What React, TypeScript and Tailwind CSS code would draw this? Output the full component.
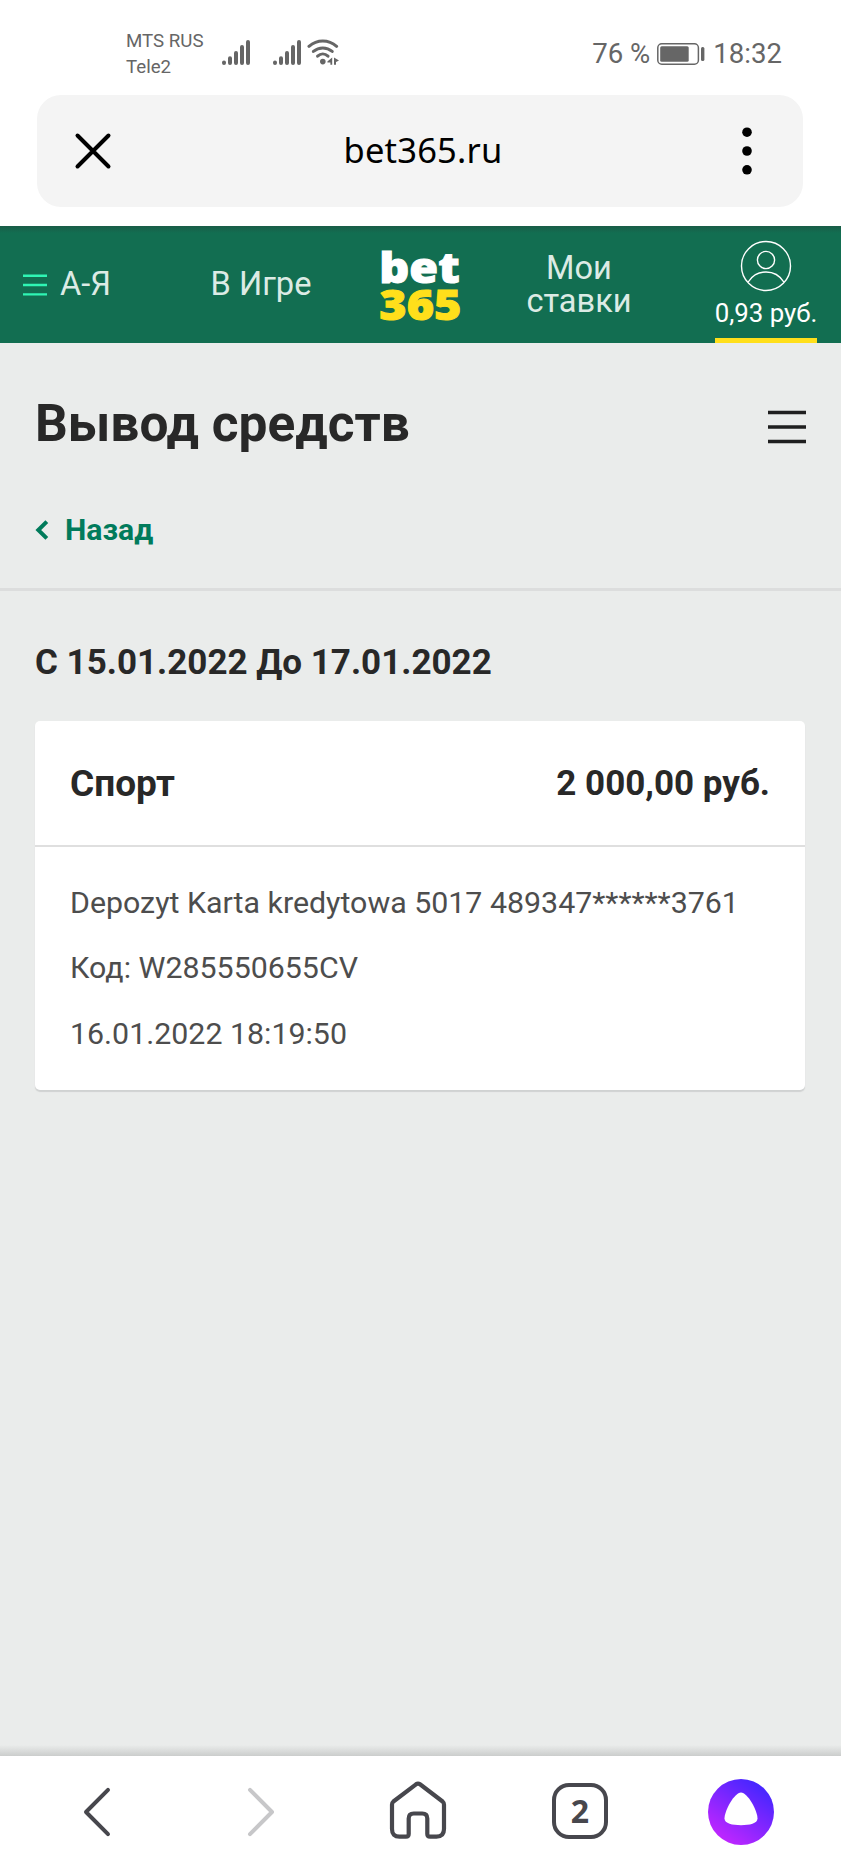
import React from "react";

interface TransactionType {
  product: string;
  amount: string;
  details: string[];
}

const transaction: TransactionType = {
  product: "Спорт",
  amount: "2 000,00 руб.",
  details: [
    "Depozyt Karta kredytowa 5017 489347******3761",
    "Код: W285550655CV",
    "16.01.2022 18:19:50",
  ],
};

const SignalIcon = () => (
  <svg width="28" height="26" viewBox="0 0 28 26" stroke="#666666" strokeWidth="4" strokeLinecap="round">
    <path d="M2 23.6v.4M8 19.2V24M14 14V24M20 8V24M26 3V24" />
  </svg>
);

const WifiIcon = () => (
  <svg width="34" height="28" viewBox="0 0 34 28" fill="none" stroke="#666666" strokeWidth="3.1" strokeLinecap="round">
    <path d="M2 8.3C10.2 1.2 21.4 1.2 29.6 8.3" />
    <path d="M6.4 13.4C12 8.8 19.6 8.8 25.2 13.4" />
    <path d="M10.6 18.1C13.8 15.2 17.8 15.2 21 18.1" />
    <circle cx="15.8" cy="23.6" r="2.8" fill="#666666" stroke="none" />
    <path d="M20.4 23.6L25.2 19.5V26.8H23.4V24.6H20.4ZM27 19.5L32 22.5L29 23.9V26.8H27Z" fill="#666666" stroke="none" />
  </svg>
);

const BatteryIcon = () => (
  <svg width="48" height="22" viewBox="0 0 48 22">
    <rect x=".8" y=".8" width="40.6" height="20.4" rx="4" fill="none" stroke="#666666" strokeWidth="1.5" />
    <rect x="3.2" y="3.2" width="28.5" height="15.6" rx="1.5" fill="#666666" />
    <rect x="44" y="4" width="3.4" height="14" rx="1.5" fill="#666666" />
  </svg>
);

const StatusBar = () => (
  <div className="flex h-[95px] items-start bg-white text-[#666666]">
    <div className="ml-[126px] mt-[28px] w-[96px] whitespace-nowrap text-[18.7px] leading-[26px]">
      <div>MTS RUS</div>
      <div>Tele2</div>
    </div>
    <div className="mt-[39px] flex">
      <SignalIcon />
      <div className="ml-[23px]">
        <SignalIcon />
      </div>
      <div className="-mt-[1px] ml-[6px]">
        <WifiIcon />
      </div>
    </div>
    <div className="ml-auto mr-[59px] mt-[38px] flex items-center whitespace-nowrap text-[27.6px] leading-8">
      <span>76 %</span>
      <div className="ml-[7px] mr-[8px]">
        <BatteryIcon />
      </div>
      <span>18:32</span>
    </div>
  </div>
);

const AddressBar = () => (
  <div className="h-[131px] bg-white pl-[37px] pr-[38px]">
    <div className="flex h-[112px] items-center justify-between rounded-[24px] bg-[#f4f4f4] px-[37px]">
      <svg width="38" height="38" viewBox="0 0 38 38" stroke="#000" strokeWidth="4" strokeLinecap="round">
        <path d="M3.5 3.5L34.5 34.5M34.5 3.5L3.5 34.5" />
      </svg>
      <span className="pb-[2px] pl-[6px] font-['Noto_Sans'] text-[34.5px] leading-none tracking-[0.2px] text-black">
        bet365.ru
      </span>
      <svg width="38" height="50" viewBox="0 0 38 50" fill="#000">
        <circle cx="19" cy="6.2" r="4.8" />
        <circle cx="19" cy="25" r="4.8" />
        <circle cx="19" cy="43.8" r="4.8" />
      </svg>
    </div>
  </div>
);

const SiteHeader = () => (
  <header className="flex h-[117px] bg-[#126e51] bg-[linear-gradient(#1a5c47,#126e51_7px)] text-[32.6px] text-[#dcebe5]">
    <div className="flex w-[180px] items-center pl-[23px]">
      <svg width="24" height="22" viewBox="0 0 24 22" stroke="#2ff5b4" strokeWidth="2.4">
        <path d="M0 1.7H24M0 11H24M0 20.4H24" />
      </svg>
      <span className="ml-[13px]">А-Я</span>
    </div>
    <div className="flex w-[162px] items-center justify-center">В Игре</div>
    <div className="flex w-[156px] items-center justify-center pl-[1px]">
      <div className="flex scale-x-110 flex-col font-['Open_Sans'] text-[42.5px] font-extrabold leading-[37px] [-webkit-text-stroke-width:1px]">
        <span className="text-white">bet</span>
        <span className="text-[#ffdf1b]">365</span>
      </div>
    </div>
    <div className="flex w-[160px] items-center justify-center pl-[2px] text-center leading-[33px]">
      Мои
      <br />
      ставки
    </div>
    <div className="ml-auto mr-[24px] flex w-[102px] flex-col items-center border-b-[5px] border-[#ffdf1b] pt-[14px] text-white">
      <svg width="52" height="52" viewBox="0 0 52 52" fill="none" stroke="#fff" strokeWidth="1.4">
        <circle cx="26" cy="26" r="24.5" />
        <circle cx="26" cy="20" r="8.6" />
        <path d="M8.2 42C16.5 28.6 35.5 28.6 43.8 42" />
      </svg>
      <span className="mt-[5px] whitespace-nowrap text-[25.8px] leading-[32px]">0,93 руб.</span>
    </div>
  </header>
);

const TransactionCard = ({ transaction }: { transaction: TransactionType }) => (
  <div className="ml-[35px] mr-[36px] h-[369px] rounded-[5px] bg-white shadow-[0_2px_1px_#d0d2d2]">
    <div className="flex h-[126px] items-center justify-between border-b-2 border-[#dfdfdf] px-[35px] pt-[2px] text-[35px] font-bold text-[#282828]">
      <span className="text-[37px]">{transaction.product}</span>
      <span>{transaction.amount}</span>
    </div>
    <div className="px-[35px] pt-[23px] text-[30.35px] leading-[65.4px] text-[#4d4d4d]">
      {transaction.details.map((line) => (
        <div key={line} className="whitespace-nowrap">
          {line}
        </div>
      ))}
    </div>
  </div>
);

/* browser navigation at the bottom of the screen */
const BottomBar = () => (
  <nav className="flex h-[112px] items-center bg-white pb-[1px]">
    <div className="flex w-[178px] justify-center pl-[16px]">
      <svg width="30" height="52" viewBox="0 0 30 52" fill="none" stroke="#47474d" strokeWidth="4" strokeLinecap="round" strokeLinejoin="round">
        <path d="M26 3.8L4 26L26 48.2" />
      </svg>
    </div>
    <div className="flex w-[162px] justify-center pl-[3px]">
      <svg width="30" height="52" viewBox="0 0 30 52" fill="none" stroke="#c7c7c9" strokeWidth="4" strokeLinecap="round" strokeLinejoin="round">
        <path d="M4 3.8L26 26L4 48.2" />
      </svg>
    </div>
    <div className="flex w-[156px] justify-center pb-[1px]">
      <svg width="60" height="60" viewBox="0 0 60 60" fill="none" stroke="#47474d" strokeWidth="4.2" strokeLinejoin="round">
        <path d="M28 3.3Q30 1.8 32 3.3L54.6 20.5Q56 21.7 56 23.5V48Q56 55.6 48.5 55.6H42Q39.3 55.6 39.3 53V37.5Q39.3 32.5 34.3 32.5H25.7Q20.7 32.5 20.7 37.5V53Q20.7 55.6 18 55.6H11.5Q4 55.6 4 48V23.5Q4 21.7 5.4 20.5Z" />
      </svg>
    </div>
    <div className="flex w-[168px] justify-center pb-[1px]">
      <div className="flex size-[56px] items-center justify-center rounded-[17px] border-4 border-[#47474d] font-['Noto_Sans'] text-[32px] font-bold leading-none text-[#47474d]">
        2
      </div>
    </div>
    <div className="flex w-[154px] justify-center">
      <div className="flex size-[66px] items-center justify-center rounded-full bg-[linear-gradient(215deg,#3f26ff_10%,#c226ff_88%)]">
        <svg className="-mt-[5px]" width="34" height="34" viewBox="0 0 34 34" fill="#fff">
          <path d="M17 .5C23.5 .5 33.5 18.5 33.5 26.5C33.5 31.5 25.5 33.2 17 33.2C8.5 33.2 .5 31.5 .5 26.5C.5 18.5 10.5 .5 17 .5Z" />
        </svg>
      </div>
    </div>
  </nav>
);

const App = () => {
  return (
    <div className="flex h-[1868px] w-[841px] flex-col overflow-hidden bg-[#eaeceb] font-[Roboto,sans-serif]">
      <StatusBar />
      <AddressBar />
      <SiteHeader />
      <main className="flex-1">
        <div className="flex h-[168px] items-center justify-between px-[35px]">
          <h1 className="pb-[7px] text-[51.4px] font-bold leading-none text-[#282828]">Вывод средств</h1>
          <svg width="38" height="34" viewBox="0 0 38 34" stroke="#1f1f1f" strokeWidth="3.4">
            <path d="M0 2.5H38M0 17H38M0 31.5H38" />
          </svg>
        </div>
        <div className="flex h-[80px] items-start border-b-3 border-[#dcdddd] pl-[35px] text-[30.2px] font-bold leading-[38px] text-[#017b5b]">
          <svg className="mt-[9px]" width="14" height="20" viewBox="0 0 14 20" fill="none" stroke="#017b5b" strokeWidth="4">
            <path d="M11.8 1.6L3.3 10L11.8 18.4" />
          </svg>
          <span className="ml-[16px]">Назад</span>
        </div>
        <h2 className="pb-[37px] pl-[35px] pt-[51px] text-[35px] font-bold leading-[42px] text-[#282828]">
          С 15.01.2022 До 17.01.2022
        </h2>
        <TransactionCard transaction={transaction} />
      </main>
      <div className="h-[11px] bg-[linear-gradient(#eaeceb,#cbcdcc)]" />
      <BottomBar />
    </div>
  );
};

export default App;
